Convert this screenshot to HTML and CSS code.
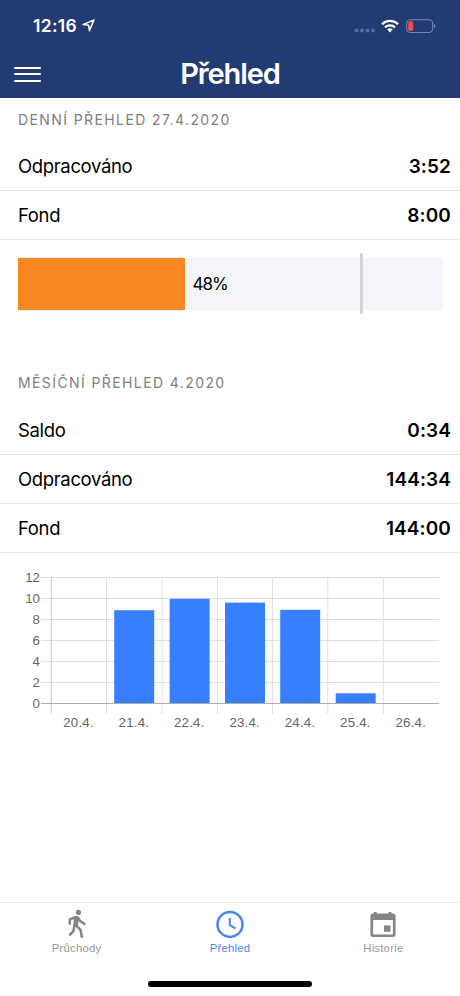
FILE: index.html
```html
<!DOCTYPE html>
<html lang="cs">
<head>
    <meta charset="UTF-8">
    <meta name="viewport" content="width=device-width, initial-scale=1.0">
    <title>Přehled</title>
    <link rel="stylesheet" href="styles.css">
</head>
<body>
    <header class="header">
        <div class="status">
            <span class="time">12:16</span>
            <svg class="location" width="13" height="13" viewBox="0 0 13 13">
                <path d="M1 5.6L12 1L7.4 11.6L6.6 6.2Z" fill="none" stroke="#fff" stroke-width="1.5" stroke-linejoin="round"/>
            </svg>
            <svg class="signal" width="22" height="5" viewBox="0 0 22 5">
                <g fill="#576a9d">
                    <circle cx="2.5" cy="2.5" r="2"/>
                    <circle cx="8" cy="2.5" r="2"/>
                    <circle cx="13.5" cy="2.5" r="2"/>
                    <circle cx="19" cy="2.5" r="2"/>
                </g>
            </svg>
            <svg class="wifi" width="18" height="14" viewBox="0 0 18 14">
                <g fill="none" stroke="#fff" stroke-width="2.3">
                    <path d="M1 5.2A11.4 11.4 0 0 1 17 5.2"/>
                    <path d="M4 8.4A7.2 7.2 0 0 1 14 8.4"/>
                </g>
                <path d="M6.2 10.6A4 4 0 0 1 11.8 10.6L9 13.5Z" fill="#fff"/>
            </svg>
            <svg class="battery" width="31" height="14" viewBox="0 0 31 14">
                <rect x="1.7" y="0.7" width="26" height="12.8" rx="3.7" fill="none" stroke="#7685b0" stroke-width="1.1"/>
                <rect x="3.2" y="2.3" width="5" height="9.6" rx="1.6" fill="#f4484b"/>
                <path d="M29 5C30.7 5.5 30.7 8.7 29 9.2Z" fill="#7685b0"/>
            </svg>
        </div>
        <div class="toolbar">
            <button class="menu" type="button" aria-label="Menu">
                <span></span>
                <span></span>
                <span></span>
            </button>
            <h1>Přehled</h1>
        </div>
    </header>

    <main class="content">
        <section class="daily">
            <h2>Denní přehled 27.4.2020</h2>
            <div class="row"><span>Odpracováno</span><b>3:52</b></div>
            <div class="row"><span>Fond</span><b>8:00</b></div>
            <div class="progress">
                <div class="progress-fill"></div>
                <span class="progress-text">48%</span>
                <div class="progress-mark"></div>
            </div>
        </section>

        <section class="monthly">
            <h2>Měsíční přehled 4.2020</h2>
            <div class="row"><span>Saldo</span><b>0:34</b></div>
            <div class="row"><span>Odpracováno</span><b>144:34</b></div>
            <div class="row"><span>Fond</span><b>144:00</b></div>
            <svg class="chart" width="460" height="190" viewBox="0 0 460 190">
                <g class="grid">
                    <path d="M41 24.5H439M41 45.5H439M41 66.5H439M41 87.5H439M41 108.5H439M41 129.5H439"/>
                    <path d="M106.5 24.5V161M162 24.5V161M217.5 24.5V161M272.5 24.5V161M327.8 24.5V161M383.4 24.5V161"/>
                </g>
                <path class="axis-y" d="M51.3 24.5V161"/>
                <g class="bars">
                    <rect x="114.2" y="57.2" width="40" height="93.3"/>
                    <rect x="169.6" y="45.8" width="40" height="104.7"/>
                    <rect x="225" y="49.6" width="40" height="100.9"/>
                    <rect x="280.2" y="56.8" width="40" height="93.7"/>
                    <rect x="335.7" y="140.3" width="40" height="10.2"/>
                </g>
                <path class="axis" d="M41 150.5H439"/>
                <g class="labels-y">
                    <text x="40" y="29">12</text>
                    <text x="40" y="50">10</text>
                    <text x="40" y="71">8</text>
                    <text x="40" y="92">6</text>
                    <text x="40" y="113">4</text>
                    <text x="40" y="134">2</text>
                    <text x="40" y="155">0</text>
                </g>
                <g class="labels-x">
                    <text x="78.5" y="174.3">20.4.</text>
                    <text x="133.9" y="174.3">21.4.</text>
                    <text x="189.3" y="174.3">22.4.</text>
                    <text x="244.7" y="174.3">23.4.</text>
                    <text x="300" y="174.3">24.4.</text>
                    <text x="355.4" y="174.3">25.4.</text>
                    <text x="410.8" y="174.3">26.4.</text>
                </g>
            </svg>
        </section>
    </main>

    <footer class="footer">
        <nav class="tabs">
            <a class="tab">
                <svg width="32" height="32" viewBox="0 0 24 24">
                    <circle cx="13.1" cy="3.3" r="1.9" fill="currentColor"/>
                    <g fill="none" stroke="currentColor" stroke-width="1.9" stroke-linejoin="round">
                        <path d="M6.6 12.6V8.5L10.8 6.9H12.4L14.4 9.8L18.2 12.4"/>
                        <path d="M10.1 13.2L9.3 17.4L6.3 20.6"/>
                        <path d="M11.3 13.2L14.7 16.4L15.7 22.3"/>
                    </g>
                    <path d="M9.8 6.5Q12.2 5.5 13.7 7.3L12.5 14.3L9.1 14.1Z" fill="currentColor"/>
                </svg>
                <span>Průchody</span>
            </a>
            <a class="tab active">
                <svg width="32" height="32" viewBox="0 0 32 32">
                    <g fill="none" stroke="currentColor">
                        <circle cx="16" cy="16.4" r="12.5" stroke-width="2.5"/>
                        <path d="M15.8 10V17.1L21.6 20.3" stroke-width="2"/>
                    </g>
                </svg>
                <span>Přehled</span>
            </a>
            <a class="tab">
                <svg width="32" height="32" viewBox="0 0 32 32">
                    <path fill="currentColor" fill-rule="evenodd" d="M6.8 4H9.6V5.6H21.6V4H24.4V5.6H26A2.6 2.6 0 0 1 28.6 8.2V26.3A2.6 2.6 0 0 1 26 28.9H6A2.6 2.6 0 0 1 3.4 26.3V8.2A2.6 2.6 0 0 1 6 5.6H6.8ZM6.1 12.1V25.4Q6.1 26.4 7.1 26.4H24.9Q25.9 26.4 25.9 25.4V12.1ZM17 17.4H23.4V23.8H17Z"/>
                </svg>
                <span>Historie</span>
            </a>
        </nav>
        <div class="home-bar"></div>
    </footer>
</body>
</html>
```
FILE: styles.css
```css
* {
    box-sizing: border-box;
}
body {
    margin: 0;
    height: 996px;
    display: flex;
    flex-direction: column;
    overflow: hidden;
    background-color: #fff;
    color: #000;
    font-family: Inter, "Liberation Sans", sans-serif;
}
.header {
    height: 98px;
    background-color: #223b73;
    color: #fff;
}
.status {
    display: flex;
    align-items: center;
    height: 50px;
    padding: 1px 24px 0 33px;
}
.time {
    width: 45px;
    font-size: 17.5px;
    font-weight: 600;
    letter-spacing: 0.3px;
    white-space: nowrap;
}
.location {
    margin-left: 4px;
}
.signal {
    margin: 9px 5px 0 auto;
}
.wifi {
    margin-right: 6px;
}
.toolbar {
    display: grid;
    grid-template-columns: 60px 1fr 60px;
    align-items: center;
    height: 48px;
}
.menu {
    display: flex;
    flex-direction: column;
    gap: 4.5px;
    width: 27px;
    margin-left: 14px;
    padding: 0;
    border: 0;
    background: none;
}
.menu span {
    height: 2px;
    border-radius: 1px;
    background-color: #fff;
}
h1 {
    margin: 0;
    font-size: 29px;
    font-weight: 600;
    line-height: 48px;
    letter-spacing: -1.1px;
    text-align: center;
}
.content {
    flex: 1;
}
h2 {
    margin: 0;
    height: 44px;
    padding-left: 18px;
    color: #808080;
    font-size: 14px;
    font-weight: 400;
    line-height: 44px;
    letter-spacing: 1.4px;
    text-transform: uppercase;
}
.daily {
    height: 264px;
}
.monthly h2 {
    line-height: 42px;
}
.row {
    display: flex;
    justify-content: space-between;
    align-items: center;
    height: 49px;
    padding: 0 9px 0 18px;
    border-bottom: 1px solid #e5e5e5;
    font-size: 18.5px;
    letter-spacing: -0.35px;
}
.row b {
    font-weight: 600;
    font-size: 19px;
    letter-spacing: 0.1px;
}
.progress {
    position: relative;
    display: flex;
    align-items: center;
    height: 52px;
    margin: 18px 17px 0 17.5px;
    border-radius: 3px;
    background-color: #f4f5f9;
}
.progress-fill {
    width: 167px;
    height: 100%;
    background-color: #f88722;
}
.progress-text {
    margin-left: 8px;
    font-size: 17px;
    letter-spacing: -1px;
}
.progress-mark {
    position: absolute;
    left: 342.5px;
    top: -5px;
    width: 3px;
    height: 61px;
    border-radius: 1px;
    background-color: #d3d4d8;
}
.chart {
    display: block;
}
.grid {
    fill: none;
    stroke: #dfdfdf;
}
.axis-y {
    stroke: #c9c9c9;
}
.axis {
    stroke: #adadad;
}
.bars {
    fill: #387fff;
}
.labels-y, .labels-x {
    fill: #666;
    font-family: "Liberation Sans", Arial, sans-serif;
    font-size: 13.3px;
}
.labels-y {
    text-anchor: end;
}
.labels-x {
    text-anchor: middle;
    letter-spacing: 0.2px;
}
.footer {
    height: 94px;
    border-top: 1px solid #e9e9e9;
}
.tabs {
    display: flex;
    height: 78px;
    padding-top: 5px;
}
.tab {
    flex: 1;
    display: flex;
    flex-direction: column;
    align-items: center;
    color: #858585;
}
.tab span {
    margin-top: 2px;
    color: #999;
    font-family: "Liberation Sans", Arial, sans-serif;
    font-size: 11.4px;
    line-height: 13px;
    letter-spacing: 0.2px;
}
.tab.active, .tab.active span {
    color: #4a87ec;
}
.home-bar {
    width: 164px;
    height: 6px;
    margin: 0 auto;
    border-radius: 3px;
    background-color: #000;
}
```
